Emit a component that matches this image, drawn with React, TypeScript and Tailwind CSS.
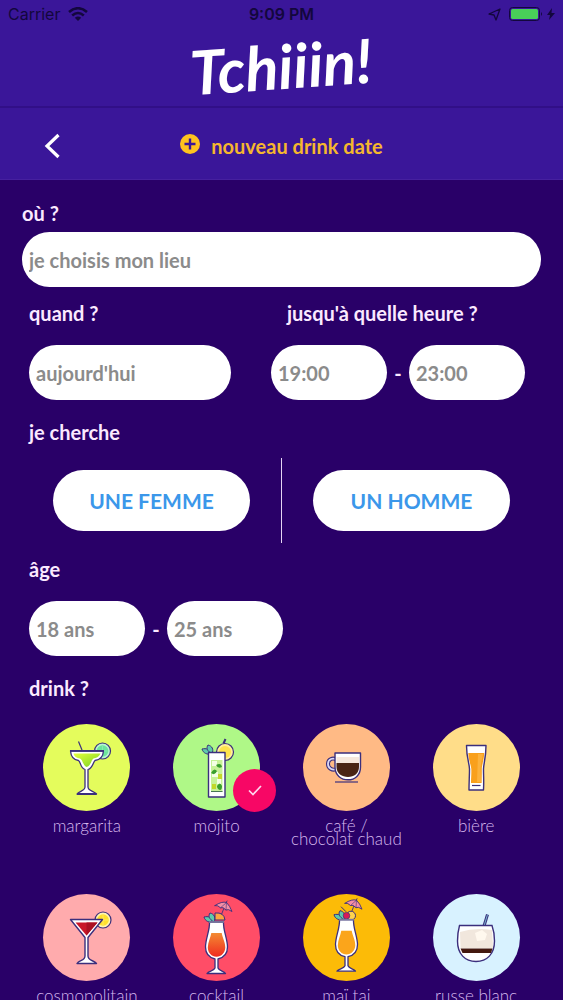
import { useState, type ReactNode } from "react";

const INK = "#3b2f7d";

function LimeSlice({ cx, cy, rind, flesh }: { cx: number; cy: number; rind: string; flesh: string }) {
  return (
    <g>
      <circle cx={cx} cy={cy} r="8" fill={rind} stroke={INK} strokeWidth="1.2" />
      <circle cx={cx} cy={cy} r="5.8" fill={flesh} />
      <path d={`M${cx} ${cy - 5}V${cy + 5}M${cx - 5} ${cy}H${cx + 5}`} stroke={rind} strokeWidth=".4" />
    </g>
  );
}

function Leaves({ x, y }: { x: number; y: number }) {
  return (
    <g transform={`translate(${x} ${y})`} fill="#5ecbaa" stroke={INK} strokeWidth="1">
      <path d="M10 9C5 10 1 8 0 4c4-1 8 0 10 5Z" />
      <path d="M10 9C5 6 4 3 6 0c4 1 6 4 4 9Z" />
    </g>
  );
}

function Umbrella() {
  return (
    <g stroke={INK} strokeWidth=".9" strokeLinejoin="round" strokeLinecap="round">
      <path d="M51 14 47.5 23M53 9 54 7" fill="none" />
      <path d="M42 11.5Q49 7 53.5 8.5 57 12 59 17.5 55 14.500 53 16 50 12.5 47.5 13.8 45 11 42 11.5Z" fill="#f58fa4" />
      <path d="M53.5 8.5 47.5 13.8M53.5 8.5 53 16" fill="none" strokeWidth=".6" />
    </g>
  );
}

function Hurricane({ liquid }: { liquid: string }) {
  return (
    <g>
      <path
        d="M36.5 28H50.5C50 36 54.5 45 54.5 53 54.5 59 51 63.5 45 65V74C46 77 51 77 52.5 79.5H34C35.5 77 41 77 42 74V65C36 63.5 32.5 59 32.5 53 32.5 45 37 36 36.5 28Z"
        fill="#fff"
        stroke={INK}
        strokeWidth="1.3"
        strokeLinejoin="round"
      />
      <path d="M38.3 39H48.7C49.5 44 52.3 48 52.3 53.5 52 59 48.5 62.5 43.5 62.8 38.5 62.5 35 59 34.8 53.5 35 48 37.5 44 38.3 39Z" fill={liquid} />
      <path d="M36 28H51" stroke="#79769f" strokeWidth="1.8" />
    </g>
  );
}

function Margarita() {
  return (
    <g strokeLinejoin="round">
      <defs>
        <linearGradient id="lime" x1="0" x2="1" y2="1">
          <stop stopColor="#e5ff3c" />
          <stop offset="1" stopColor="#79d321" />
        </linearGradient>
      </defs>
      <LimeSlice cx={59.5} cy={27} rind="#b9f5d0" flesh="#6ce59c" />
      <path d="M35.5 17.5 39 26" stroke={INK} strokeWidth="1.2" />
      <path d="M27.5 27H60.5C60 33 56 36 52 36.5 50 38 50 44 45 45.5V63C45 67 51 67 53.5 70H34C36 67 42 67 42 63V45.5C37 44 38 38 35.5 36.5 31 36 28 33 27.5 27Z" fill="#fff" stroke={INK} strokeWidth="1.3" />
      <path d="M30.5 29.5H57.5C56 33 53 34.2 50.5 34.5 48 36 48 42 43.7 43 40 42 40 36 37 34.5 34 34 31.5 33 30.5 29.5Z" fill="url(#lime)" />
      <path d="M27 26.8H61M34 70H53.5" stroke={INK} strokeWidth="1.8" />
    </g>
  );
}

function Mojito() {
  return (
    <g strokeLinejoin="round">
      <circle cx="52" cy="28" r="8.5" fill="#fff09a" stroke={INK} strokeWidth="1.2" />
      <circle cx="52" cy="28" r="6" fill="#ffe34c" />
      <path d="M50.5 19.5 52.5 15" stroke={INK} strokeWidth="2" />
      <Leaves x={29} y={21} />
      <path d="M35.5 28.5H52V73H35.5Z" fill="#fff" stroke={INK} strokeWidth="1.4" />
      <path d="M38 36H49.5V68H38Z" fill="#c7f297" />
      <path d="M39 37h5v5h-5zM44 55h4v5h-4zM39 48h6v5h-6z" fill="#f4ffe4" />
      <path d="M43 41q5-3 6 2-4 2-6-2ZM38 49q3-6 6-2-2 5-6 2ZM44 62q3-5 5 0 0 4-2 4-3-1-3-4Z" fill="#399f2d" />
      <path d="M45 50h4v5h-4zM39 60h4v5h-4z" fill="#c3d82a" />
      <path d="M38 67.5H49.5" stroke="#477754" strokeWidth="1" />
    </g>
  );
}

function Coffee() {
  return (
    <g>
      <path d="M34 36C30 33 25 35 25 40 25 44 29 47 34 45" fill="none" stroke={INK} strokeWidth="4" />
      <path d="M34 36C30 33 25 35 25 40 25 44 29 47 34 45" fill="none" stroke="#dcd8f4" strokeWidth="1.8" />
      <path d="M32 29H57.5V43C57.500 51 52 55.8 45 55.8S32 51 32 43Z" fill="#fff" stroke={INK} strokeWidth="1.4" strokeLinejoin="round" />
      <path d="M33.5 33H56V39H33.5Z" fill="#f6e8dd" />
      <path d="M33.5 39H56V43C56 49.5 51 53 45 53S33.5 49.5 33.5 43Z" fill="#4a2514" />
      <path d="M32 58H55" stroke={INK} strokeWidth="1.2" />
    </g>
  );
}

function Beer() {
  return (
    <g>
      <path d="M33.5 21.5H53C53 34 50.5 40 50.5 45 50.5 52 51 58 50.5 66H36C36 58 36.5 52 36.5 45 36.5 40 33.500 34 33.5 21.5Z" fill="#fff" stroke={INK} strokeWidth="1.4" strokeLinejoin="round" />
      <path d="M35.3 29H51.2C51 36 48.8 41 48.8 45 48.8 50 48.8 54 48.6 59H38C38 54 38.500 50 38.3 45 38 41 35.5 36 35.3 29Z" fill="#f9a01c" />
      <path d="M45 30h5c-1 6-2.5 10-2.5 15l.5 13h-4z" fill="#fcb23c" />
      <path d="M39 61.5H47.5" stroke={INK} strokeWidth="1.2" />
    </g>
  );
}

function Cosmopolitan() {
  return (
    <g strokeLinejoin="round">
      <LimeSlice cx={60} cy={26} rind="#fff5b2" flesh="#ffe12c" />
      <path d="M27.5 25.5H59.5L45 43.5V62C45 67 51 66 53.5 69.5H34C36 66 42 67 42 62V43.5Z" fill="#fff" stroke={INK} strokeWidth="1.4" />
      <path d="M32.5 28.5H54.5L43.5 41.5Z" fill="#c91628" />
      <path d="M43.5 28.5h11l-11 13z" fill="#aa1022" />
    </g>
  );
}

function Cocktail() {
  return (
    <g>
      <defs>
        <linearGradient id="sunset" x2="0" y2="1">
          <stop stopColor="#f38b32" />
          <stop offset="1" stopColor="#f02b20" />
        </linearGradient>
      </defs>
      <Umbrella />
      <Leaves x={31} y={19} />
      <path d="M42 26V19Q51 18 52 26Z" fill="#ffa440" stroke={INK} />
      <Hurricane liquid="url(#sunset)" />
    </g>
  );
}

function MaiTai() {
  return (
    <g transform="translate(0 -2.3)">
      <Umbrella />
      <Leaves x={31} y={19} />
      <circle cx="48" cy="24" r="4.5" fill="#ffd34e" stroke={INK} />
      <circle cx="43.5" cy="24" r="3.3" fill="#d81b56" stroke={INK} strokeWidth=".7" />
      <path d="M43 20 38 15" stroke={INK} />
      <Hurricane liquid="#fba51b" />
    </g>
  );
}

function WhiteRussian() {
  return (
    <g>
      <path d="M51 32 54.5 20.5" stroke={INK} strokeWidth="3" />
      <path d="M51 32 54.5 20.5" stroke="#77b7cf" strokeWidth="1" />
      <path d="M26.5 31.5H59C61 37 61.5 41 61.5 47 61.5 60 54 67.5 43 67.5S24.5 60 24.5 47C24.5 41 25 37 26.5 31.5Z" fill="#fff" stroke={INK} strokeWidth="1.4" />
      <path d="M27 38Q42 33 59 36L60 54H27.5Z" fill="#f1e7dd" />
      <path d="M42 39 49 36 54 40 52 46 44 47Z" fill="#fff8ee" />
      <path d="M27.5 54.5H59.5L58 59H29.5Z" fill="#43180f" />
    </g>
  );
}

interface Drink {
  name: string;
  color: string;
  art: ReactNode;
}

const drinks: Drink[] = [
  { name: "margarita", color: "bg-[#e4fc5c]", art: <Margarita /> },
  { name: "mojito", color: "bg-[#aff887]", art: <Mojito /> },
  { name: "café /\nchocolat chaud", color: "bg-[#ffba85]", art: <Coffee /> },
  { name: "bière", color: "bg-[#ffdd89]", art: <Beer /> },
  { name: "cosmopolitain", color: "bg-[#ffabad]", art: <Cosmopolitan /> },
  { name: "cocktail", color: "bg-[#ff4d67]", art: <Cocktail /> },
  { name: "maï tai", color: "bg-[#fcbb07]", art: <MaiTai /> },
  { name: "russe blanc", color: "bg-[#d8f2ff]", art: <WhiteRussian /> },
];

const label = "block text-[20px] leading-6 font-bold text-[#fbe9ff]";
const field =
  "h-[55px] w-full min-w-0 rounded-full bg-white px-[7px] text-[20px] font-bold text-[#8b8b8b] placeholder:text-[#8b8b8b] placeholder:opacity-100";
const choice =
  "h-[61px] w-full rounded-full bg-white text-[21px] font-bold text-[#3b97ea]";

function Range({ name, from, to }: { name: string; from: string; to: string }) {
  return (
    <div className="grid grid-cols-[1fr_22px_1fr] items-center">
      <input className={field} placeholder={from} aria-label={`${name} minimum`} />
      <span className="text-center text-[20px] font-bold text-[#fbe9ff]">-</span>
      <input className={field} placeholder={to} aria-label={`${name} maximum`} />
    </div>
  );
}

function StatusBar() {
  return (
    <div className="grid h-7 grid-cols-3 items-center px-2 font-['Inter',sans-serif] text-[16px] text-[#13073d]">
      <div className="flex items-center gap-2">
        <span>Carrier</span>
        <svg viewBox="0 0 20 14" className="h-[14px] w-5" fill="none" stroke="currentColor" strokeWidth="2.6">
          <path d="M1 5Q10-2.5 19 5M4.2 8.5Q10 3.5 15.8 8.5" />
          <path d="M10 14 6.8 10.8Q10 8 13.2 10.8Z" fill="currentColor" stroke="none" />
        </svg>
      </div>
      <span className="text-center font-semibold">9:09 PM</span>
      <div className="flex items-center justify-end gap-2">
        <svg viewBox="0 0 13 13" className="size-[13px]" fill="none" stroke="currentColor" strokeWidth="1.3" strokeLinejoin="round">
          <path d="M12 1 1 6 6 7 8 12Z" />
        </svg>
        <svg viewBox="0 0 34 14" className="h-[14px] w-[34px]">
          <rect x=".5" y=".5" width="30" height="13" rx="3" fill="none" stroke="currentColor" />
          <rect x="2" y="2" width="27" height="10" rx="1.5" fill="#49cf59" />
          <path d="M32 5Q34 7 32 9Z" fill="currentColor" />
        </svg>
        <svg viewBox="0 0 8 12" className="-ml-1 h-3 w-2" fill="currentColor">
          <path d="M5 0 0 7H3L2 12 8 5H4.5Z" />
        </svg>
      </div>
    </div>
  );
}

export default function App() {
  const [selected, setSelected] = useState("mojito");

  return (
    <div className="flex h-screen flex-col overflow-hidden bg-[#290068] font-['Lato',sans-serif]">
      <header className="shrink-0 bg-[#3a1699]">
        <StatusBar />
        <div className="flex h-20 items-center justify-center border-b-2 border-[#310f87]">
          <h1 className="-rotate-4 pb-1 text-[61px] leading-none font-bold text-white italic">Tchiiin!</h1>
        </div>
        <nav className="grid h-[72px] grid-cols-[104px_1fr_104px] items-center border-b border-[#46209f] pt-1">
          <button aria-label="retour" className="flex h-full items-center justify-center text-white">
            <svg viewBox="0 0 16 26" className="h-[26px] w-4" fill="none" stroke="currentColor" strokeWidth="3.2">
              <path d="M14.5 2 3 13 14.5 24" />
            </svg>
          </button>
          <h2 className="flex items-center justify-center gap-[11px] text-[20px] leading-6 font-bold text-[#f5b72e]">
            <svg viewBox="0 0 20 20" className="mb-1 size-5">
              <circle cx="10" cy="10" r="10" fill="#ffc31e" />
              <path d="M10 4.5V15.5M4.5 10H15.5" stroke="#3a1699" strokeWidth="2.4" />
            </svg>
            nouveau drink date
          </h2>
        </nav>
      </header>

      <main className="min-h-0 flex-1 overflow-y-auto px-[22px] pt-[21px] [scrollbar-width:none]">
        <label htmlFor="place" className={label}>où ?</label>
        <input id="place" className={`${field} mt-[7px]`} placeholder="je choisis mon lieu" />

        <div className="mt-[14px] grid grid-cols-[202fr_254fr] gap-x-10 pr-4 pl-[7px]">
          <div className="flex flex-col gap-5">
            <label htmlFor="day" className={label}>quand ?</label>
            <input id="day" className={field} placeholder="aujourd'hui" />
          </div>
          <div className="flex flex-col gap-5">
            <h3 className={`${label} pl-4`}>jusqu'à quelle heure ?</h3>
            <Range name="heure" from="19:00" to="23:00" />
          </div>
        </div>

        <h3 className={`${label} mt-5 pl-[7px]`}>je cherche</h3>
        <div className="mt-[14px] flex h-[85px] items-center">
          <div className="flex-1 px-[31px]">
            <button className={choice}>UNE FEMME</button>
          </div>
          <div className="h-full w-px bg-[#e5d5f3]" />
          <div className="flex-1 px-[31px]">
            <button className={choice}>UN HOMME</button>
          </div>
        </div>

        <h3 className={`${label} mt-[14px] pl-[7px]`}>âge</h3>
        <div className="mt-5 ml-[7px] max-w-[254px]">
          <Range name="âge" from="18 ans" to="25 ans" />
        </div>

        <h3 className={`${label} mt-5 pl-[7px]`}>drink ?</h3>
        <div className="mt-6 grid auto-rows-[170px] grid-cols-4">
          {drinks.map((drink) => (
            <button
              key={drink.name}
              aria-pressed={selected === drink.name}
              onClick={() => setSelected(drink.name)}
              className="flex flex-col items-center gap-2 text-[17px] leading-[13px] font-light text-[#d6b8ee]"
            >
              <span className={`relative size-[87px] rounded-full ${drink.color}`}>
                <svg viewBox="0 0 87 87" fill="none" className="size-full">{drink.art}</svg>
                {selected === drink.name && (
                  <span className="absolute -right-4 -bottom-px flex size-[43px] items-center justify-center rounded-full bg-[#f70765]">
                    <svg viewBox="0 0 14 11" className="h-[11px] w-[14px]" fill="none" stroke="#ffd5ee" strokeWidth="1.7">
                      <path d="M1 5.5 5 9.5 13 1" />
                    </svg>
                  </span>
                )}
              </span>
              <span className="whitespace-pre-line">{drink.name}</span>
            </button>
          ))}
        </div>
      </main>
    </div>
  );
}
